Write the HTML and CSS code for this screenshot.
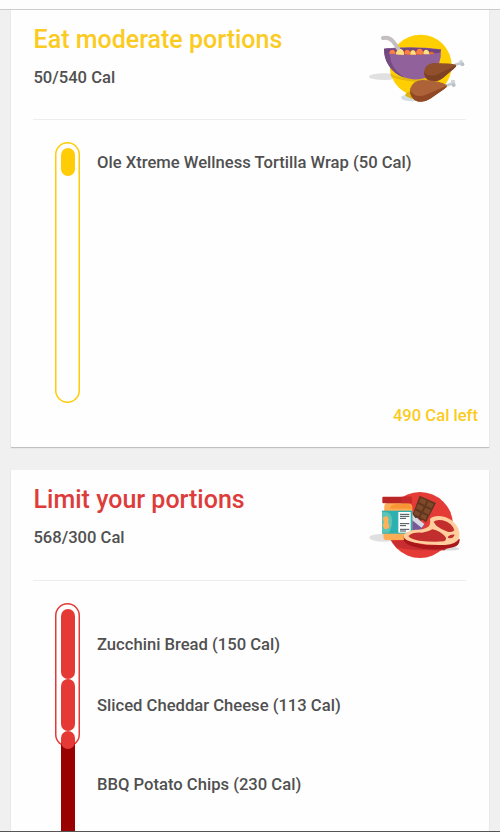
FILE: index.html
```html
<!DOCTYPE html>
<html lang="en">
<head>
  <meta charset="UTF-8">
  <title>Portions</title>
  <link rel="stylesheet" href="styles.css">
</head>
<body>
  <div class="topbar"></div>

  <div class="card moderate">
    <div class="card-header">
      <div>
        <h2>Eat moderate portions</h2>
        <p class="total">50/540 Cal</p>
      </div>
      <svg class="picture" viewBox="24 24 300 240">
        <!-- shadows -->
        <ellipse cx="72" cy="170" rx="45" ry="10" fill="#e0e0e0"/>
        <ellipse cx="157" cy="233" rx="34" ry="11" fill="#d3dde0"/>
        <circle cx="182" cy="137" r="93" fill="#ffcf02"/>
        <path d="M91 160 Q120 181 210 175 L205 188 Q130 185 94 170Z" fill="#e4b70c"/>
        <path d="M153 212 Q128 221 139 229 Q151 235 160 238Z" fill="#ddb20a"/>
        <!-- bowl -->
        <path d="M72 86 Q157 77 243 88 Q245 139 214 166 Q194 180 158 178 Q105 172 84 133 Q72 113 72 86Z" fill="#91619b"/>
        <path d="M72 86 Q80 84 89 85 Q85 144 134 173 Q102 164 84 133 Q72 113 72 86Z" fill="#754b83"/>
        <path d="M73 88 Q157 78 243 89 L239 98 Q157 108 77 97Z" fill="#704580"/>
        <path d="M87 98 Q157 84 225 99 Q156 110 87 98Z" fill="#c94826"/>
        <path d="M88 101 Q87 90 97 89 Q106 89 107 102Z M134 103 Q132 89 143 89 Q151 90 151 104Z M169 95 Q171 85 180 86 Q188 87 190 98 L186 104 L168 103Z" fill="#f68048"/>
        <path d="M108 103 Q109 87 121 87 Q132 89 132 104Z M151 104 Q150 91 159 90 Q167 91 168 104Z M190 103 Q189 89 199 89 Q208 91 209 103Z" fill="#ffe184"/>
        <path d="M209 103 Q208 94 216 95 Q223 97 223 102Z" fill="#e66e37"/>
        <path d="M69 54 Q87 50 98 63 Q108 75 115 87" fill="none" stroke="#c3bec0" stroke-width="12" stroke-linecap="round"/>
        <path d="M109 103 Q109 89 121 88 Q132 90 132 104Z" fill="#ffe184"/>
        <!-- drumsticks -->
        <path d="M282 136 L301 130" stroke="#c5cbd3" stroke-width="8"/>
        <circle cx="303" cy="126" r="6" fill="#d0d5da"/>
        <circle cx="307" cy="133" r="6" fill="#b9c0c8"/>
        <path d="M288 134 Q275 129 218 129 Q194 134 192 155 Q192 179 214 184 Q232 187 250 173 Q271 154 288 140Z" fill="#914f2c"/>
        <path d="M192 156 Q203 172 231 164 L288 135 Q288 141 280 148 L247 175 Q229 188 210 182 Q193 176 192 156Z" fill="#7d4224"/>
        <path d="M255 198 L275 191" stroke="#c5cbd3" stroke-width="8"/>
        <circle cx="279" cy="186" r="7" fill="#d0d5da"/>
        <circle cx="281" cy="195" r="6" fill="#b9c0c8"/>
        <path d="M260 195 Q240 181 187 180 Q158 182 150 207 Q149 237 174 245 Q194 248 214 234 Q242 213 260 202Z" fill="#ad6238"/>
        <path d="M150 211 Q166 237 198 224 L260 197 Q260 202 248 211 L213 235 Q191 249 172 244 Q151 237 150 211Z" fill="#914925"/>
      </svg>
    </div>
    <div class="chart">
      <div class="tube">
        <div class="fill wrap"></div>
      </div>
      <p class="food">Ole Xtreme Wellness Tortilla Wrap (50 Cal)</p>
    </div>
    <p class="left">490 Cal left</p>
  </div>

  <div class="card limit">
    <div class="card-header">
      <div>
        <h2>Limit your portions</h2>
        <p class="total">568/300 Cal</p>
      </div>
      <svg class="picture" viewBox="24 24 300 240">
        <!-- shadows -->
        <ellipse cx="72" cy="173" rx="44" ry="12" fill="#e0e0e0"/>
        <path d="M232 209 Q281 215 299 207 Q293 197 246 200Z" fill="#dadada"/>
        <circle cx="180" cy="135" r="99" fill="#e53b37"/>
        <path d="M96 184 L132 181 Q155 205 235 208 Q252 207 262 204 L254 211 Q163 214 108 202Z" fill="#c82e31"/>
        <!-- chocolate -->
        <path d="M152 95 L194 134 L178 155 L141 151Z" fill="#77589b"/>
        <path d="M156 102 L193 132 L185 143 L151 116Z" fill="#d8d8e0"/>
        <path d="M179 47 L228 69 L198 127 L187 119 L181 122 L174 113 L166 114 L158 103Z" fill="#62351f"/>
        <path d="M183 54 L200 62 L194 75 L177 67Z M205 64 L221 72 L215 85 L199 77Z M174 72 L191 80 L185 93 L168 85Z M196 83 L212 90 L206 104 L190 96Z M165 91 L181 99 L176 109 L162 103Z M186 101 L202 108 L196 120 L181 111Z" fill="#7d4a2a"/>
        <!-- jar -->
        <path d="M73 77 Q74 70 84 69 H144 Q155 70 157 81 V172 Q153 180 144 180 H76 Q70 178 70 168Z" fill="#ffad54"/>
        <path d="M92 79 Q99 71 118 71 H145 Q154 72 156 86 H91Z" fill="#f99535"/>
        <rect x="67" y="50" width="88" height="20" rx="3" fill="#ba2525"/>
        <path d="M124 50 H152 Q156 50 156 54 V66 Q156 70 151 70 H124Z" fill="#c62a2a"/>
        <rect x="66" y="92" width="91" height="69" fill="#2eafb0"/>
        <path d="M66 97 Q89 92 95 111 Q100 137 87 158 H66Z" fill="#5bc4b6"/>
        <path d="M71 111 Q85 104 86 119 Q82 126 89 139 Q83 153 72 145 Q65 134 73 126 Q66 118 71 111Z" fill="#ffb158"/>
        <rect x="115" y="96" width="37" height="62" fill="#fff"/>
        <path d="M120 103 H148 M120 109 H148 M120 115 H138 M120 131 H148 M120 137 H138 M120 148 H148 M120 153 H138" stroke="#414b50" stroke-width="3"/>
        <!-- steak -->
        <path d="M131 166 Q137 185 191 194 Q255 200 299 176 Q300 191 288 199 Q255 213 188 206 Q144 200 132 184Z" fill="#aa171b"/>
        <path d="M210 117 Q222 106 244 109 Q268 113 281 127 Q302 145 298 173 Q290 192 255 195 Q207 197 165 188 Q129 182 131 166 Q138 153 166 149 Q185 151 198 144 Q214 139 210 117Z" fill="#ffce9c"/>
        <path d="M221 125 Q230 117 248 121 Q276 128 283 151 Q278 158 263 155 Q244 149 230 138 Q224 131 221 125Z" fill="#c22e2d"/>
        <path d="M145 168 Q157 156 186 158 Q205 156 217 148 Q236 151 252 166 Q264 177 253 184 Q217 187 177 182 Q152 177 145 168Z" fill="#c22e2d"/>
        <path d="M263 170 Q275 161 284 164 Q279 177 265 174Z" fill="#c22e2d"/>
      </svg>
    </div>
    <div class="chart">
      <div class="tube">
        <div class="fill bread"></div>
        <div class="fill cheese"></div>
        <div class="fill chips"></div>
        <div class="over"></div>
      </div>
      <div class="foods">
        <p class="food">Zucchini Bread (150 Cal)</p>
        <p class="food">Sliced Cheddar Cheese (113 Cal)</p>
        <p class="food">BBQ Potato Chips (230 Cal)</p>
      </div>
    </div>
  </div>
</body>
</html>
```

FILE: styles.css
```css
* {
  box-sizing: border-box;
}

body {
  margin: 0;
  height: 832px;
  overflow: hidden;
  background: #f0f0f0;
  border-bottom: 1px solid #555;
  font-family: Roboto, sans-serif;
  font-weight: 500;
  color: #505050;
}

h2,
p {
  margin: 0;
  font-weight: 500;
  white-space: nowrap;
}

.topbar {
  height: 10px;
  background: #fdfdfd;
  border-bottom: 1px solid #cbcbcb;
}

.card {
  width: 478px;
  height: 437px;
  margin: 0 11px 23px;
  padding: 0 23px 0 22px;
  background: #fefefe;
  box-shadow: 0 1px 1px rgba(0, 0, 0, 0.2);
}

.moderate {
  --color: #ffcc05;
  --title: #fbcb22;
}

.limit {
  --color: #e53935;
  --title: #dd3c3a;
  height: 361px;
  margin-bottom: 0;
  overflow: hidden;
}

.card-header {
  display: flex;
  justify-content: space-between;
  height: 110px;
  border-bottom: 1px solid #ededed;
}

.limit .card-header {
  height: 111px;
}

h2 {
  margin-top: 14px;
  padding-left: 0.6px;
  font-size: 25px;
  line-height: 32px;
  color: var(--title);
}

.total {
  margin-top: 11px;
  padding-left: 0.4px;
  font-size: 16.6px;
  line-height: 22px;
}

.picture {
  width: 100px;
  height: 80px;
  margin: 18px -2px 0 0;
}

.chart {
  display: flex;
  gap: 17px;
  padding: 22px 0 0 22px;
}

.tube {
  width: 25px;
  height: 261px;
  padding: 6px 5px 0 6px;
  border-radius: 13px;
  box-shadow: inset 0 0 0 1.5px var(--color);
}

.fill {
  width: 14px;
  border-radius: 7px;
  background: var(--color);
}

.food {
  font-size: 16.62px;
  line-height: 22px;
}

.wrap {
  height: 28px;
}

.moderate .food {
  padding-top: 10px;
}

.left {
  margin: 1px -12px 0 0;
  padding-top: 1px;
  font-size: 16.6px;
  line-height: 22px;
  text-align: right;
  color: var(--title);
}

.limit .tube {
  height: 144px;
}

.bread {
  height: 70px;
}

.cheese {
  height: 52px;
}

.chips {
  position: relative;
  height: 18px;
  z-index: 1;
}

.over {
  width: 14px;
  height: 100px;
  margin-top: -7px;
  background: #990000;
}

.foods {
  display: flex;
  flex-direction: column;
  padding-top: 31px;
}

.foods .food:nth-child(2) {
  margin-top: 39px;
}

.foods .food:nth-child(3) {
  margin-top: 57px;
}
```
